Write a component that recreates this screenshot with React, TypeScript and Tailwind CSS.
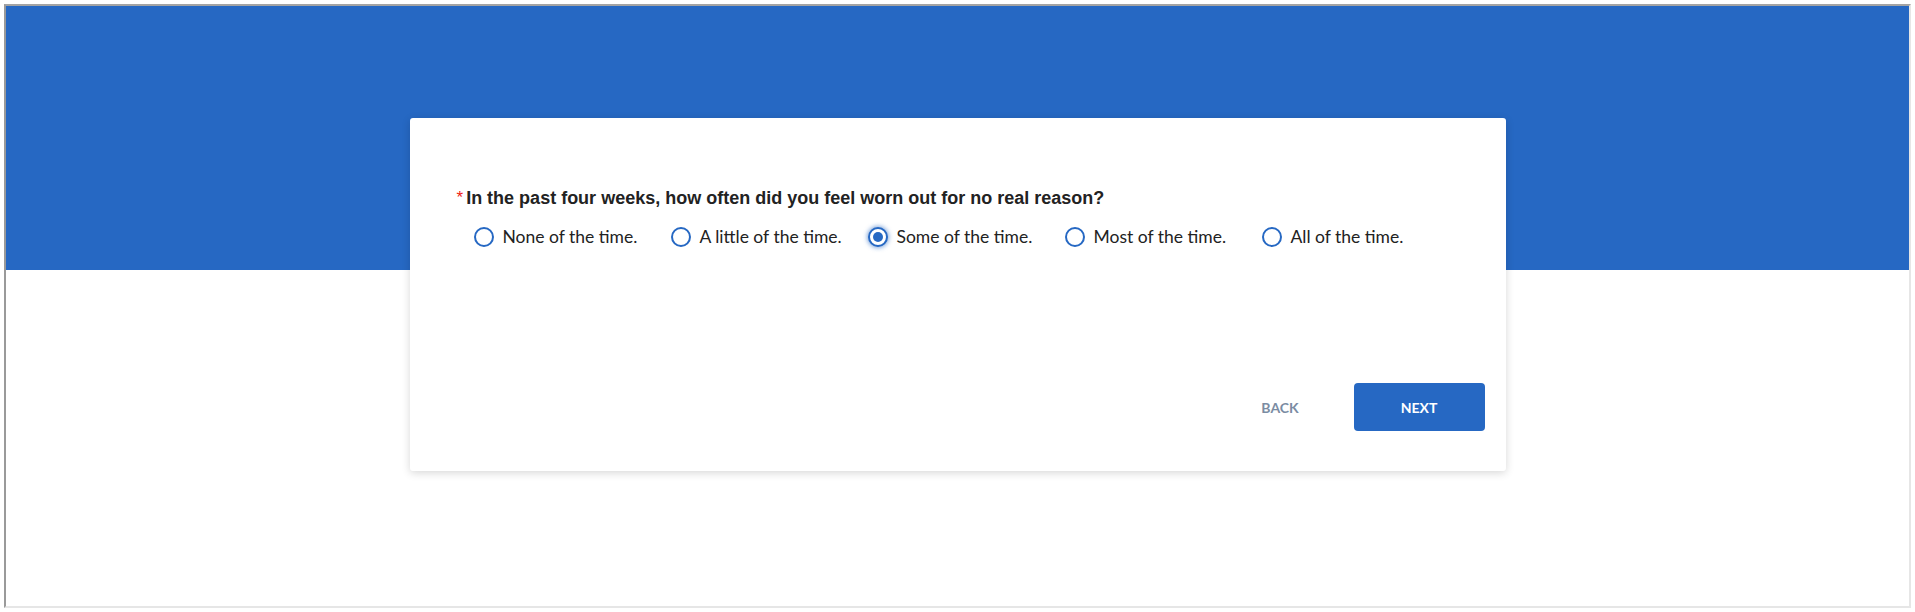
import React from "react";

const options = [
  "None of the time.",
  "A little of the time.",
  "Some of the time.",
  "Most of the time.",
  "All of the time.",
];

function Radio({ checked }: { checked: boolean }) {
  return (
    <span
      className={
        "flex h-[20px] w-[20px] shrink-0 items-center justify-center rounded-full border-2 border-[#2668c3] bg-white " +
        (checked ? "shadow-[0_0_4px_1px_rgba(38,104,194,0.55)]" : "")
      }
    >
      {checked && <span className="h-[10px] w-[10px] rounded-full bg-[#2668c3]" />}
    </span>
  );
}

export default function App() {
  return (
    <div className="h-[612px] w-[1915px] bg-white p-[4px]">
      <div className="flex h-[604px] flex-col border-2 border-t-[#a3a3a3] border-l-[#9a9a9a] border-r-[#e6e6e6] border-b-[#e6e6e6] bg-white">
        <div className="h-[264px] w-full shrink-0 bg-[#2668c3]" />
        <div className="-mt-[152px] flex justify-center">
          <div className="flex h-[353px] w-[1096px] flex-col rounded-[3px] bg-white pl-[47px] pr-[21px] pt-[68px] pb-[40px] shadow-[0_2px_8px_rgba(0,0,0,0.16)]">
            <div className="flex h-[24px] items-center font-['Liberation_Sans',Arial,sans-serif] text-[18px] font-bold text-[#222222]">
              <span className="mr-[3px] text-[17px] font-normal text-[#f01c14]">*</span>
              <span>In the past four weeks, how often did you feel worn out for no real reason?</span>
            </div>
            <div className="mt-[15px] flex h-[24px] items-center pl-[17px] font-['Lato','Noto_Sans',sans-serif] text-[17.5px] text-[#222222]">
              {options.map((o, i) => (
                <label key={o} className="flex w-[197px] shrink-0 items-center gap-[9px]">
                  <Radio checked={i === 2} />
                  <span>{o}</span>
                </label>
              ))}
            </div>
            <div className="mt-auto flex justify-end gap-[8px] font-['Lato','Noto_Sans',sans-serif] text-[14px] font-bold">
              <button className="flex h-[48px] w-[131px] items-center justify-center rounded-[4px] text-[#7b8ca3]">
                BACK
              </button>
              <button className="flex h-[48px] w-[131px] items-center justify-center rounded-[4px] bg-[#2668c3] text-white">
                NEXT
              </button>
            </div>
          </div>
        </div>
      </div>
    </div>
  );
}
